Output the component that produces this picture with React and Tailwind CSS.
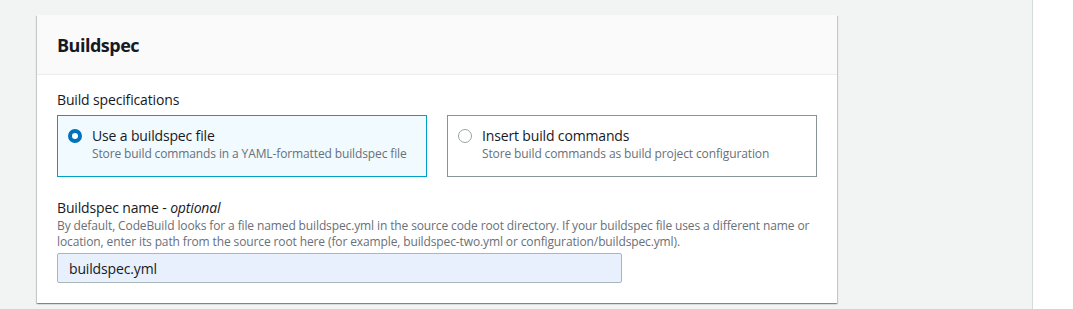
export default function App() {
  return (
    <div className="flex h-[309px] w-[1073px] overflow-hidden bg-white text-[#16191f]" style={{ fontFamily: '"Open Sans", "Noto Sans", Arial, sans-serif' }}>
      <div className="h-full w-[1033px] border-r border-[#d5dbdb] bg-[#f2f3f3] pl-[37px] pt-[15px]">
        <div className="w-[800px] bg-white shadow-[0_1px_1px_0_rgba(0,28,36,0.3),1px_1px_1px_0_rgba(0,28,36,0.15),-1px_1px_1px_0_rgba(0,28,36,0.15)]">
          <div className="flex h-[60px] items-center border-b border-[#eaeded] bg-[#fafafa] px-5">
            <h2 className="text-[18px] font-bold leading-[22px] tracking-[-0.5px]">Buildspec</h2>
          </div>
          <div className="px-5 pb-5 pt-[15px]">
            <div className="text-[14px] leading-[20px] tracking-[-0.15px]">Build specifications</div>
            <div className="mt-[5px] grid grid-cols-2 gap-5">
              <div className="flex h-[62px] gap-[10px] border border-[#00a1c9] bg-[#f1faff] pl-[10px] pt-[10px]">
                <div className="mt-[3px] h-[14px] w-[14px] shrink-0 rounded-full border-[4px] border-[#0073bb] bg-white" />
                <div>
                  <div className="text-[14px] leading-[20px] tracking-[-0.15px]">Use a buildspec file</div>
                  <div className="text-[12px] leading-[16px] tracking-[-0.12px] text-[#687078]">Store build commands in a YAML-formatted buildspec file</div>
                </div>
              </div>
              <div className="flex h-[62px] gap-[10px] border border-[#879596] bg-white pl-[10px] pt-[10px]">
                <div className="mt-[3px] h-[14px] w-[14px] shrink-0 rounded-full border border-[#95a5a6] bg-white" />
                <div>
                  <div className="text-[14px] leading-[20px] tracking-[-0.15px]">Insert build commands</div>
                  <div className="text-[12px] leading-[16px] tracking-[-0.12px] text-[#687078]">Store build commands as build project configuration</div>
                </div>
              </div>
            </div>
            <div className="mt-[21px] text-[14px] leading-[20px] tracking-[-0.15px]">
              Buildspec name - <i>optional</i>
            </div>
            <div className="w-[760px] text-[12px] leading-[16px] tracking-[-0.12px] text-[#687078]">
              By default, CodeBuild looks for a file named buildspec.yml in the source code root directory. If your buildspec file uses a different name or location, enter its path from the source root here (for example, buildspec-two.yml or configuration/buildspec.yml).
            </div>
            <div className="mt-[3px] flex h-[30px] w-[565px] items-center rounded-[2px] border border-[#aab7b8] bg-[#e8f0fe] px-[11px] text-[14px] tracking-[-0.15px]">
              buildspec.yml
            </div>
          </div>
        </div>
      </div>
    </div>
  );
}
